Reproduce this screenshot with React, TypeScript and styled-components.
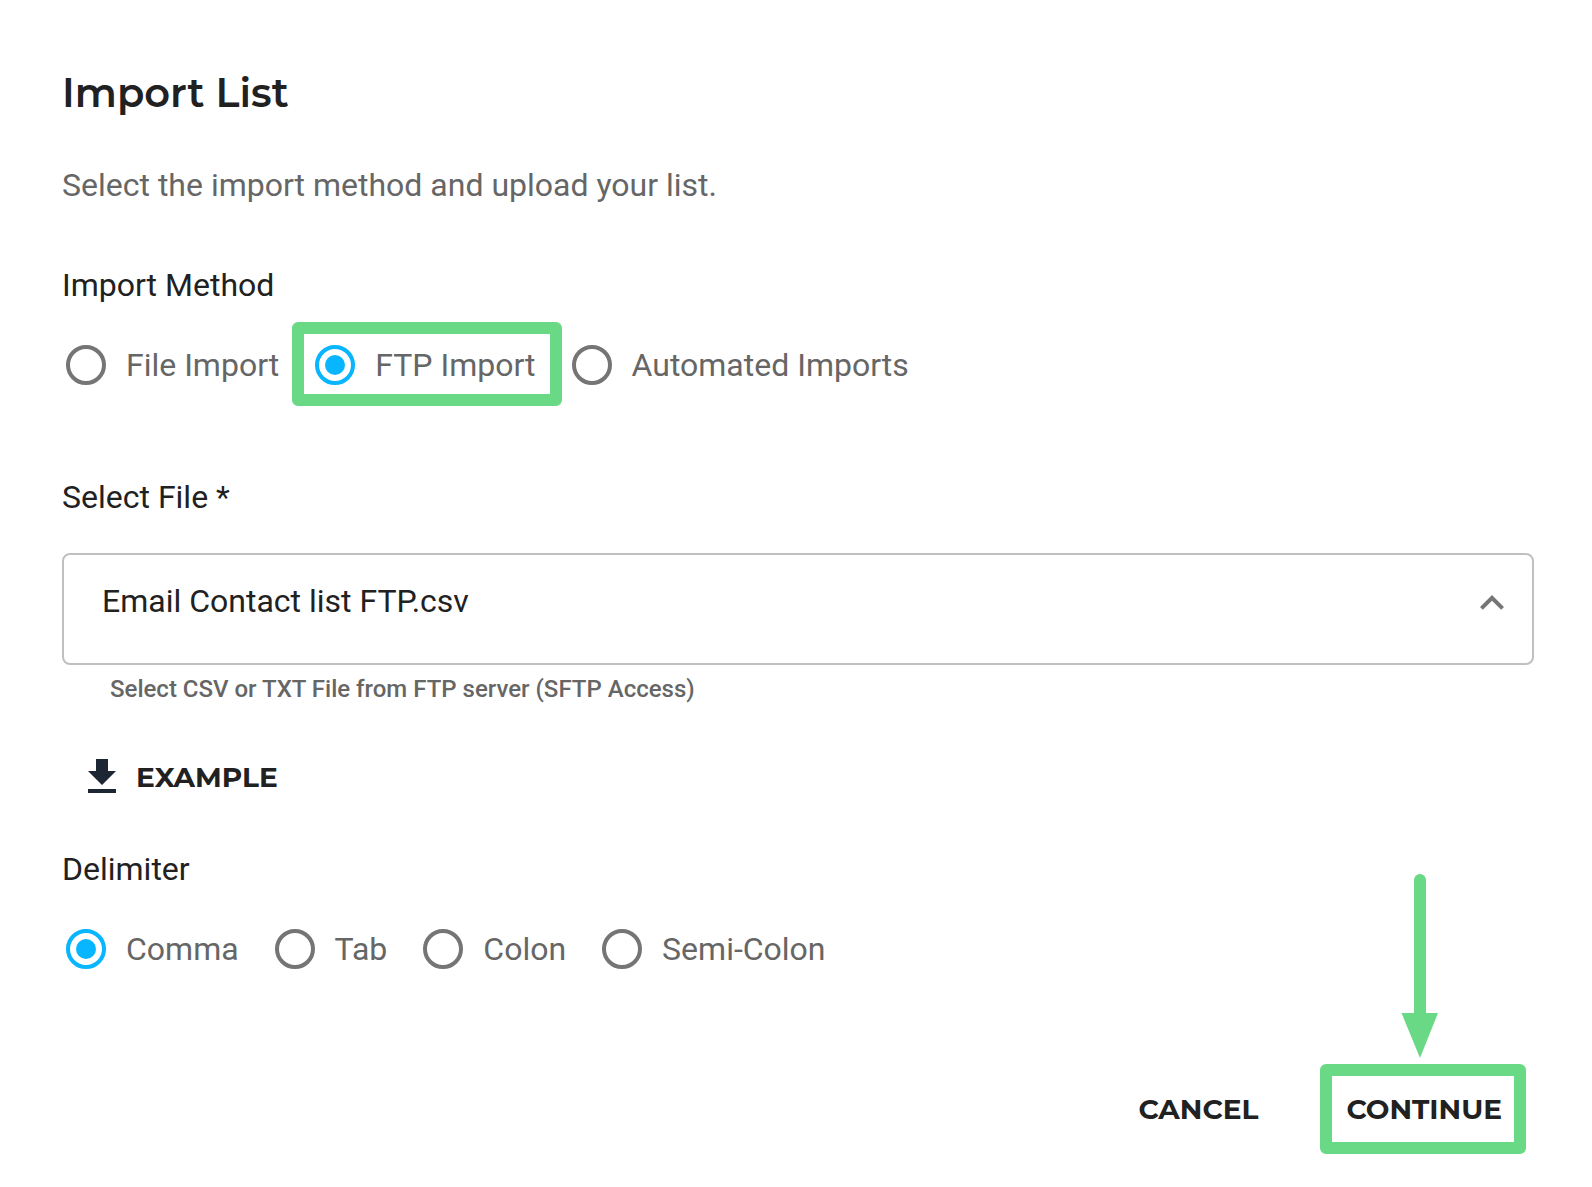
import { useState } from "react";
import styled, { createGlobalStyle, css } from "styled-components";

const colors = {
  text: "#212121",
  muted: "#666666",
  ring: "#757575",
  border: "#c0c0c0",
  accent: "#08b5ff",
  highlight: "#69d985",
  icon: "#1d2733",
};

const GlobalStyle = createGlobalStyle`
  *, *::before, *::after { box-sizing: border-box; }
  body {
    margin: 0;
    background: #ffffff;
    color: ${colors.text};
    font-family: Roboto, "Liberation Sans", sans-serif;
    font-size: 32px;
    line-height: 40px;
  }
`;

const displayFont = css`
  font-family: Montserrat, Inter, "Open Sans", sans-serif;
`;

const Page = styled.main`
  padding: 69px 58px 32px 62px;
`;

const Title = styled.h1`
  ${displayFont}
  margin: 0;
  font-size: 40px;
  line-height: 48px;
  font-weight: 600;
`;

const Intro = styled.p`
  margin: 48px 0 60px;
  color: ${colors.muted};
`;

const FieldLabel = styled.label`
  display: block;
  margin-bottom: 36px;
`;

const RadioGroup = styled.fieldset`
  margin: 0;
  padding: 0;
  border: 0;
  min-width: 0;
`;

const Legend = styled.legend`
  padding: 0;
  margin-bottom: 40px;
`;

const Options = styled.div`
  display: flex;
  flex-wrap: wrap;
  gap: 36px;
  padding-left: 4px;
`;

const Option = styled.label`
  position: relative;
  display: flex;
  align-items: center;
  gap: 20px;
  color: ${colors.muted};
  cursor: pointer;
`;

const Radio = styled.input`
  appearance: none;
  display: grid;
  place-items: center;
  width: 40px;
  height: 40px;
  margin: 0;
  border: 4px solid ${colors.ring};
  border-radius: 50%;
  cursor: pointer;

  &:checked {
    border-color: ${colors.accent};
  }

  &:checked::before {
    content: "";
    width: 20px;
    height: 20px;
    border-radius: 50%;
    background: ${colors.accent};
  }
`;

const Highlight = styled.span<{ $inset: string }>`
  position: absolute;
  inset: ${(p) => p.$inset};
  border: 12px solid ${colors.highlight};
  border-radius: 6px;
  pointer-events: none;
`;

const FileField = styled.div`
  margin-top: 92px;
`;

const SelectBox = styled.div`
  position: relative;
`;

const Select = styled.select`
  appearance: none;
  display: block;
  width: 100%;
  height: 112px;
  padding: 0 80px 16px 38px;
  border: 2px solid ${colors.border};
  border-radius: 8px;
  background: #ffffff;
  color: ${colors.text};
  font: inherit;
`;

const SelectArrow = styled.svg`
  position: absolute;
  top: 26px;
  right: 18px;
  width: 48px;
  height: 48px;
  fill: ${colors.ring};
  pointer-events: none;
`;

const Hint = styled.p`
  margin: 8px 0 48px;
  padding-left: 48px;
  color: ${colors.muted};
  font-size: 24px;
  line-height: 32px;
  font-weight: 500;
`;

const TextButton = styled.button`
  ${displayFont}
  position: relative;
  display: flex;
  align-items: center;
  padding: 0 32px;
  border: 0;
  background: none;
  color: ${colors.text};
  font-size: 28px;
  line-height: 48px;
  font-weight: 700;
  text-transform: uppercase;
  cursor: pointer;
`;

const ExampleButton = styled(TextButton)`
  gap: 10px;
  margin-bottom: 48px;
  padding: 0 16px;
`;

const DownloadIcon = styled.svg`
  width: 48px;
  height: 48px;
  fill: ${colors.icon};
`;

const Actions = styled.footer`
  display: flex;
  justify-content: flex-end;
  gap: 24px;
  margin-top: 116px;
`;

const Arrow = styled.svg`
  position: absolute;
  left: 50%;
  bottom: 75px;
  width: 38px;
  height: 184px;
  margin-left: -23px;
  fill: ${colors.highlight};
  pointer-events: none;
`;

const methods = ["File Import", "FTP Import", "Automated Imports"];
const delimiters = ["Comma", "Tab", "Colon", "Semi-Colon"];

type ChoiceProps = {
  legend: string;
  name: string;
  options: string[];
  initial: string;
  highlighted?: string;
};

function Choice({ legend, name, options, initial, highlighted }: ChoiceProps) {
  const [value, setValue] = useState(initial);
  return (
    <RadioGroup>
      <Legend>{legend}</Legend>
      <Options>
        {options.map((option) => (
          <Option key={option}>
            <Radio
              type="radio"
              name={name}
              value={option}
              checked={value === option}
              onChange={() => setValue(option)}
            />
            {option}
            {highlighted === option && <Highlight $inset="-23px -26px -21px -23px" />}
          </Option>
        ))}
      </Options>
    </RadioGroup>
  );
}

export default function App() {
  return (
    <>
      <GlobalStyle />
      <Page>
        <Title>Import List</Title>
        <Intro>Select the import method and upload your list.</Intro>

        <Choice
          legend="Import Method"
          name="method"
          options={methods}
          initial="FTP Import"
          highlighted="FTP Import"
        />

        <FileField>
          <FieldLabel htmlFor="file">Select File *</FieldLabel>
          <SelectBox>
            <Select id="file" aria-describedby="file-hint" required>
              <option>Email Contact list FTP.csv</option>
            </Select>
            <SelectArrow viewBox="0 0 24 24" aria-hidden="true">
              <path d="M12 8l-6 6 1.41 1.41L12 10.83l4.59 4.58L18 14z" />
            </SelectArrow>
          </SelectBox>
          <Hint id="file-hint">Select CSV or TXT File from FTP server (SFTP Access)</Hint>
        </FileField>

        <ExampleButton type="button">
          <DownloadIcon viewBox="0 0 24 24" aria-hidden="true">
            <path d="M19 9h-4V3H9v6H5l7 7 7-7zM5 18v2h14v-2H5z" />
          </DownloadIcon>
          Example
        </ExampleButton>

        <Choice legend="Delimiter" name="delimiter" options={delimiters} initial="Comma" />

        <Actions>
          <TextButton type="button">Cancel</TextButton>
          <TextButton type="button">
            Continue
            <Highlight $inset="-21px 8px -21px 6px" />
            <Arrow viewBox="0 0 38 184" aria-hidden="true">
              <path d="M13 6a6 6 0 0 1 12 0v133h12L19 184 .5 139H13z" />
            </Arrow>
          </TextButton>
        </Actions>
      </Page>
    </>
  );
}
